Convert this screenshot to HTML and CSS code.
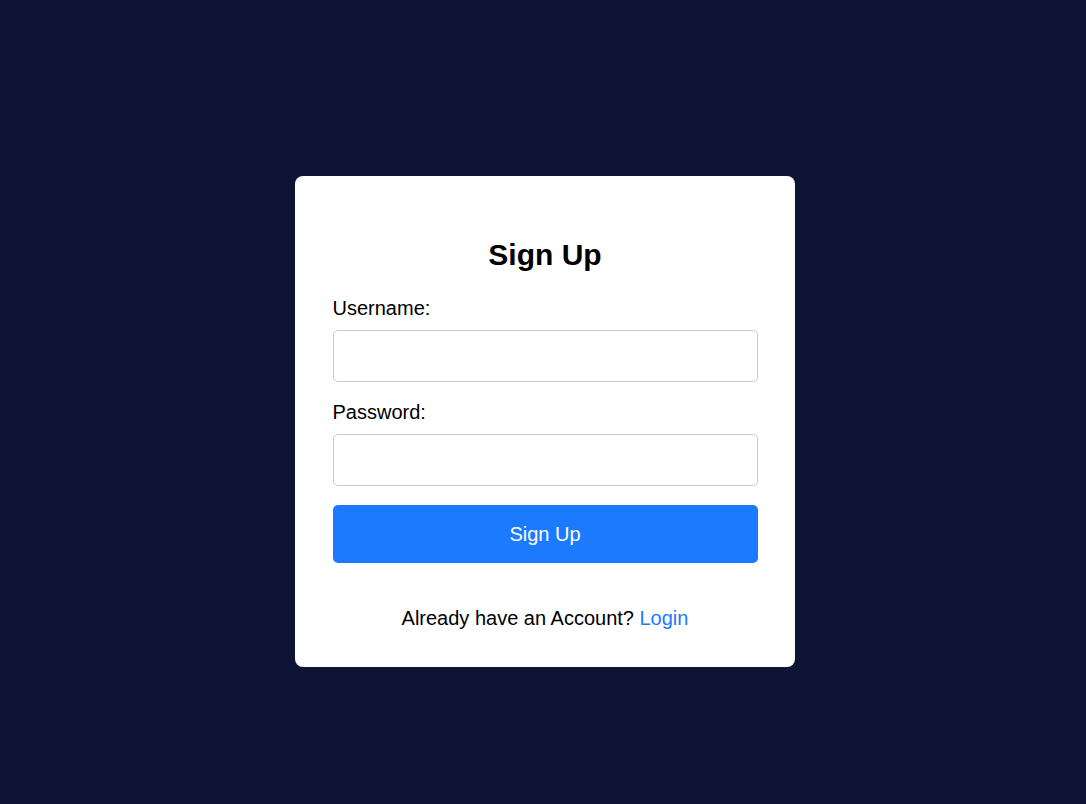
FILE: index.html
```html
<!DOCTYPE html>
<html lang="en">
<head>
  <meta charset="UTF-8">
  <meta name="viewport" content="width=device-width, initial-scale=1.0">
  <title>Sign Up</title>
  <link rel="stylesheet" href="styles.css">
</head>
<body>
  <div class="container">
    <h2>Sign Up</h2>
    <form class="signup-form" onsubmit="return false;">
      <label for="username">Username:</label>
      <input type="text" id="username" name="username">

      <label for="password">Password:</label>
      <input type="password" id="password" name="password">

      <button type="submit">Sign Up</button>
    </form>
    <p class="login-link">Already have an Account? <a href="#">Login</a></p>
  </div>
</body>
</html>
```

FILE: styles.css
```css
body {
  font-family: "Liberation Sans", Arial, sans-serif;
  margin: 0;
  padding: 176px 0 0 3px;
  min-height: 100vh;
  box-sizing: border-box;
  background-color: #0e1433;
  color: #000;
  display: flex;
  justify-content: center;
  align-items: flex-start;
}

.container {
  width: 500px;
  box-sizing: border-box;
  padding: 40px 37px 37px 38px;
  background: #fff;
  border-radius: 8px;
}

h2 {
  font-size: 30px;
  text-align: center;
  margin: 22px 0 25px;
}

.signup-form {
  display: flex;
  flex-direction: column;
}

label {
  font-size: 20px;
  margin-bottom: 10px;
}

input {
  height: 52px;
  box-sizing: border-box;
  padding: 10px;
  margin: 0 0 19px;
  border: 1px solid #ccc;
  border-radius: 5px;
  font-size: 18px;
}

button {
  height: 58px;
  border: none;
  border-radius: 5px;
  background-color: #1b7aff;
  color: #fff;
  font-family: inherit;
  font-size: 20px;
  cursor: pointer;
}

.login-link {
  font-size: 20px;
  text-align: center;
  margin: 44px 0 0;
}

.login-link a {
  color: #1b7aff;
  text-decoration: none;
}
```
